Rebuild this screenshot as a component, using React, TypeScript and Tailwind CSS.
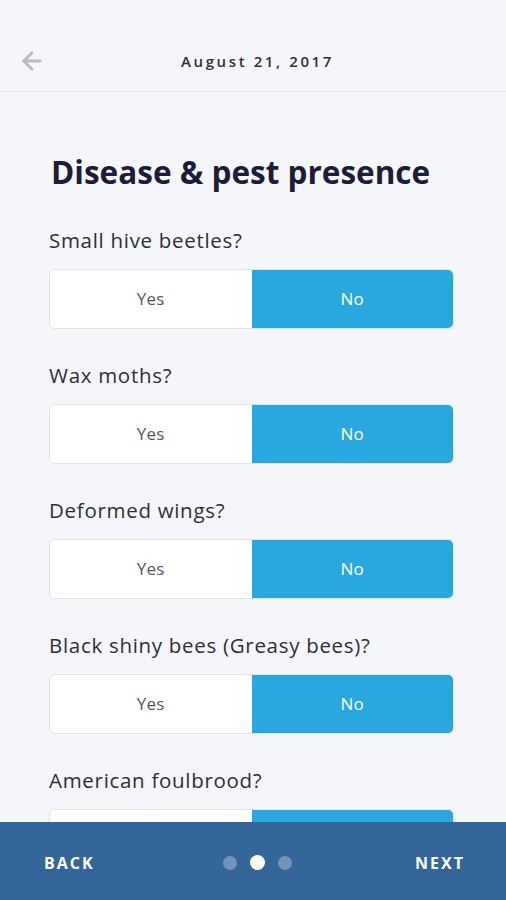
import React from "react";
import { ArrowLeft } from "lucide-react";

const questions = [
  "Small hive beetles?",
  "Wax moths?",
  "Deformed wings?",
  "Black shiny bees (Greasy bees)?",
  "American foulbrood?",
];

function Toggle() {
  return (
    <div className="flex h-[60px] w-full shrink-0 overflow-hidden rounded-[6px] border border-[#e2e4ea]">
      <div className="flex flex-1 items-center justify-center bg-white text-[17px] tracking-[0.3px] text-[#555a60]">Yes</div>
      <div className="flex flex-1 items-center justify-center bg-[#29a8e0] text-[17px] tracking-[0.3px] text-white">No</div>
    </div>
  );
}

export default function App() {
  return (
    <div
      className="flex h-[900px] w-[506px] flex-col overflow-hidden bg-[#f5f6fa]"
      style={{ fontFamily: '"Open Sans", "Noto Sans", sans-serif' }}
    >
      <div className="flex h-[92px] shrink-0 items-center border-b border-[#e4e6ea] pl-[18px] pr-[19px] pt-[31px]">
        <ArrowLeft size={28} strokeWidth={2.4} className="text-[#b9bcc2]" />
        <div className="flex-1 pr-[18px] text-center text-[15px] font-semibold tracking-[2.6px] text-[#2f3237]">
          August 21, 2017
        </div>
      </div>
      <div className="flex flex-1 flex-col overflow-hidden pl-[49px] pr-[52px] pt-[60px]">
        <div className="ml-[2px] text-[31.5px] font-bold leading-[40px] text-[#1c1e39]">
          Disease &amp; pest presence
        </div>
        <div className="mt-[36px] flex flex-col gap-[34px]">
          {questions.map((q) => (
            <div key={q} className="flex flex-col">
              <div className="mb-[17px] text-[20.5px] leading-[24px] tracking-[0.7px] text-[#2d3035]">{q}</div>
              <Toggle />
            </div>
          ))}
        </div>
      </div>
      <div className="flex h-[78px] shrink-0 items-center justify-between bg-[#34669a] pl-[44px] pr-[41px] pt-[3px]">
        <div className="text-[16px] font-bold tracking-[2px] text-white">BACK</div>
        <div className="flex items-center gap-[13px] pl-[6px]">
          <div className="h-[14px] w-[14px] rounded-full bg-white/30" />
          <div className="h-[15px] w-[15px] rounded-full bg-white" />
          <div className="h-[14px] w-[14px] rounded-full bg-white/30" />
        </div>
        <div className="text-[16px] font-bold tracking-[2px] text-white">NEXT</div>
      </div>
    </div>
  );
}
